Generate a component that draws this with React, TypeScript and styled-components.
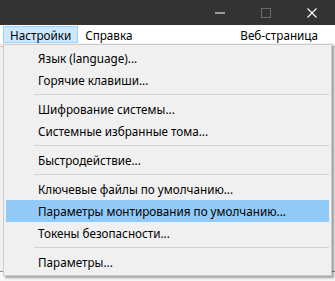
import React from "react";
import styled, { createGlobalStyle } from "styled-components";

const Global = createGlobalStyle`
  html, body { margin: 0; padding: 0; background: #ffffff; }
  body { font-family: "Noto Sans", sans-serif; }
`;

const Window = styled.div`
  position: relative;
  width: 335px;
  height: 281px;
  overflow: hidden;
  display: flex;
  flex-direction: column;
  background: #f0f0f0;
  font-family: "Noto Sans", "DejaVu Sans", sans-serif;
  font-size: 11.7px;
  color: #000;
`;

const TitleBar = styled.div`
  height: 25px;
  flex: none;
  background: #333333;
  display: flex;
  justify-content: flex-end;
  align-items: stretch;
`;

const CaptionButton = styled.div`
  width: 46px;
  display: flex;
  align-items: center;
  justify-content: center;
`;

const MenuBar = styled.div`
  height: 19px;
  flex: none;
  background: #ffffff;
  display: flex;
  align-items: stretch;
  padding: 1px 0 0 3px;
  box-sizing: border-box;
  border-bottom: 1px solid #f0f0f0;
`;

const MenuBarItem = styled.div<{ $active?: boolean; $push?: boolean }>`
  display: flex;
  align-items: center;
  padding: 0 6px;
  box-sizing: border-box;
  border: 1px solid ${(p) => (p.$active ? "#99d1ff" : "transparent")};
  background: ${(p) => (p.$active ? "#cce8ff" : "transparent")};
  margin-left: ${(p) => (p.$push ? "auto" : "0")};
  margin-right: ${(p) => (p.$push ? "10px" : "0")};
  white-space: nowrap;
`;

const Content = styled.div`
  flex: 1;
  display: flex;
  flex-direction: column;
`;

const ContentTop = styled.div`
  height: 2px;
  border-bottom: 1px solid #c8c8c8;
`;

const ContentMid = styled.div`
  flex: 1;
`;

const ContentBottom = styled.div`
  height: 9px;
  border-top: 1px solid #8a8a8a;
  background: #f7f7f7;
`;

const Dropdown = styled.div`
  position: absolute;
  left: 3px;
  top: 44px;
  width: 329px;
  box-sizing: border-box;
  background: #f0f0f0;
  border: 1px solid #cccccc;
  padding: 2px 2px;
  box-shadow: 2px 2px 2px rgba(0, 0, 0, 0.35);
  display: flex;
  flex-direction: column;
`;

const Item = styled.div<{ $hover?: boolean }>`
  height: 22px;
  display: flex;
  align-items: center;
  padding-left: 32px;
  background: ${(p) => (p.$hover ? "#91c9f7" : "transparent")};
  white-space: nowrap;
`;

const Separator = styled.div`
  height: 7px;
  display: flex;
  align-items: center;
  padding-left: 28px;
  &::after {
    content: "";
    flex: 1;
    height: 1px;
    background: #d2d2d2;
  }
`;

type Entry = { label?: string; sep?: boolean; hover?: boolean };

const entries: Entry[] = [
  { label: "Язык (language)..." },
  { label: "Горячие клавиши..." },
  { sep: true },
  { label: "Шифрование системы..." },
  { label: "Системные избранные тома..." },
  { sep: true },
  { label: "Быстродействие..." },
  { sep: true },
  { label: "Ключевые файлы по умолчанию..." },
  { label: "Параметры монтирования по умолчанию...", hover: true },
  { label: "Токены безопасности..." },
  { sep: true },
  { label: "Параметры..." },
];

export default function App() {
  return (
    <>
      <Global />
      <Window>
        <TitleBar>
          <CaptionButton>
            <svg width="10" height="10" viewBox="0 0 10 10">
              <rect x="0" y="4.5" width="10" height="1" fill="#ffffff" />
            </svg>
          </CaptionButton>
          <CaptionButton>
            <svg width="10" height="10" viewBox="0 0 10 10">
              <rect x="0.5" y="0.5" width="9" height="9" fill="none" stroke="#6b6b6b" strokeWidth="1" />
            </svg>
          </CaptionButton>
          <CaptionButton>
            <svg width="10" height="10" viewBox="0 0 10 10">
              <path d="M0.5 0.5 L9.5 9.5 M9.5 0.5 L0.5 9.5" stroke="#ffffff" strokeWidth="1.1" />
            </svg>
          </CaptionButton>
        </TitleBar>
        <MenuBar>
          <MenuBarItem $active>Настройки</MenuBarItem>
          <MenuBarItem>Справка</MenuBarItem>
          <MenuBarItem $push>Веб-страница</MenuBarItem>
        </MenuBar>
        <Content>
          <ContentTop />
          <ContentMid />
          <ContentBottom />
        </Content>
        <Dropdown>
          {entries.map((e, i) =>
            e.sep ? (
              <Separator key={i} />
            ) : (
              <Item key={i} $hover={e.hover}>
                {e.label}
              </Item>
            )
          )}
        </Dropdown>
      </Window>
    </>
  );
}
